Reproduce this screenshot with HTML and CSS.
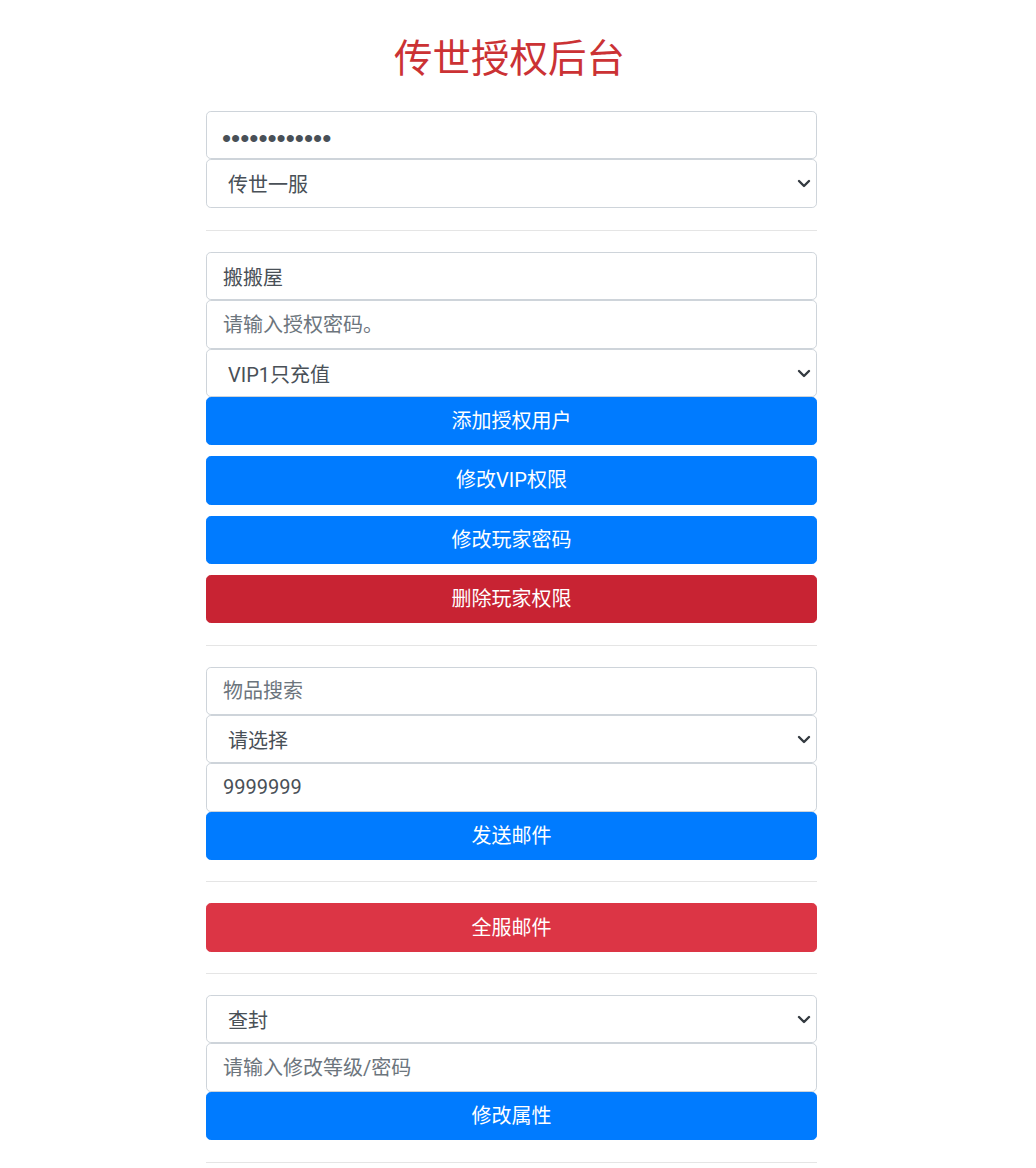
FILE: index.html
```html
<!DOCTYPE html>
<html lang="zh-CN">
<head>
    <meta charset="UTF-8">
    <meta name="viewport" content="width=device-width, initial-scale=1.0">
    <title>传世授权后台</title>
    <link rel="stylesheet" href="styles.css">
</head>
<body>
    <div class="container">
        <h1 class="title">传世授权后台</h1>

        <!-- 登录 / 选服 -->
        <form class="group" onsubmit="return false;">
            <input type="password" class="field field-pass" value="123456789012">
            <div class="select-wrap">
                <select class="field">
                    <option>传世一服</option>
                    <option>传世二服</option>
                </select>
                <svg class="caret" width="14" height="9" viewBox="0 0 14 9"><path d="M2 2l5 5 5-5" fill="none" stroke="#343a40" stroke-width="2.4" stroke-linecap="round" stroke-linejoin="round"/></svg>
            </div>
        </form>

        <hr class="hr-first">

        <!-- 授权用户 -->
        <form class="group" onsubmit="return false;">
            <input type="text" class="field" value="搬搬屋">
            <input type="text" class="field" placeholder="请输入授权密码。">
            <div class="select-wrap">
                <select class="field">
                    <option>VIP1只充值</option>
                    <option>VIP2</option>
                </select>
                <svg class="caret" width="14" height="9" viewBox="0 0 14 9"><path d="M2 2l5 5 5-5" fill="none" stroke="#343a40" stroke-width="2.4" stroke-linecap="round" stroke-linejoin="round"/></svg>
            </div>
            <div class="actions">
                <button type="button" class="btn btn-primary">添加授权用户</button>
                <button type="button" class="btn btn-primary">修改VIP权限</button>
                <button type="button" class="btn btn-primary">修改玩家密码</button>
                <button type="button" class="btn btn-danger-dark">删除玩家权限</button>
            </div>
        </form>

        <hr>

        <!-- 邮件 -->
        <form class="group" onsubmit="return false;">
            <input type="text" class="field" placeholder="物品搜索">
            <div class="select-wrap">
                <select class="field">
                    <option>请选择</option>
                </select>
                <svg class="caret" width="14" height="9" viewBox="0 0 14 9"><path d="M2 2l5 5 5-5" fill="none" stroke="#343a40" stroke-width="2.4" stroke-linecap="round" stroke-linejoin="round"/></svg>
            </div>
            <input type="text" class="field" value="9999999">
            <button type="button" class="btn btn-primary">发送邮件</button>
        </form>

        <hr>

        <div class="group">
            <button type="button" class="btn btn-danger">全服邮件</button>
        </div>

        <hr>

        <!-- 属性 -->
        <form class="group" onsubmit="return false;">
            <div class="select-wrap">
                <select class="field">
                    <option>查封</option>
                    <option>解封</option>
                </select>
                <svg class="caret" width="14" height="9" viewBox="0 0 14 9"><path d="M2 2l5 5 5-5" fill="none" stroke="#343a40" stroke-width="2.4" stroke-linecap="round" stroke-linejoin="round"/></svg>
            </div>
            <input type="text" class="field" placeholder="请输入修改等级/密码">
            <button type="button" class="btn btn-primary">修改属性</button>
        </form>

        <hr>
    </div>
</body>
</html>
```

FILE: styles.css
```css
* {
    box-sizing: border-box;
}

body {
    margin: 0;
    padding-right: 13px;
    background-color: #fff;
    color: #495057;
    font-family: "Segoe UI", Roboto, "Noto Sans CJK SC", sans-serif;
}

.container {
    width: 611px;
    margin: 0 auto;
}

.title {
    margin: 35px 0 28px;
    padding-right: 4px;
    font-size: 38.5px;
    line-height: 48px;
    font-weight: 400;
    text-align: center;
    color: #cb3234;
}

.group {
    display: flex;
    flex-direction: column;
    margin: 0;
}

.field {
    display: block;
    width: 100%;
    height: 48.3px;
    padding: 8px 16px;
    font-family: inherit;
    font-size: 20px;
    line-height: 1.5;
    color: #495057;
    background-color: #fff;
    border: 1px solid #ced4da;
    border-radius: 4.8px;
    outline: none;
}

.field::placeholder {
    color: #6c757d;
}

.field-pass {
    padding: 6px 14px 0 15px;
    font-family: "Liberation Sans", sans-serif;
    font-size: 26px;
    color: #495057;
}

.select-wrap {
    position: relative;
}

.select-wrap select {
    -webkit-appearance: none;
    appearance: none;
    padding: 10px 40px 6px 21px;
}

.caret {
    position: absolute;
    right: 6px;
    top: 50%;
    margin-top: -4px;
    pointer-events: none;
}

.actions {
    display: flex;
    flex-direction: column;
    gap: 11px;
}

.btn {
    display: block;
    width: 100%;
    height: 48.3px;
    padding: 0 16px;
    font-family: inherit;
    font-size: 20px;
    line-height: 1.5;
    color: #fff;
    border: 1px solid transparent;
    border-radius: 4.8px;
    cursor: pointer;
}

.btn-primary {
    background-color: #007bff;
    border-color: #007bff;
}

.btn-danger {
    background-color: #dc3545;
    border-color: #dc3545;
}

.btn-danger-dark {
    background-color: #c82333;
    border-color: #c82333;
}

hr {
    margin: 21.5px 0 21px;
    border: 0;
    border-top: 1px solid rgba(0, 0, 0, 0.1);
}

.hr-first {
    margin-top: 22.5px;
}
```
